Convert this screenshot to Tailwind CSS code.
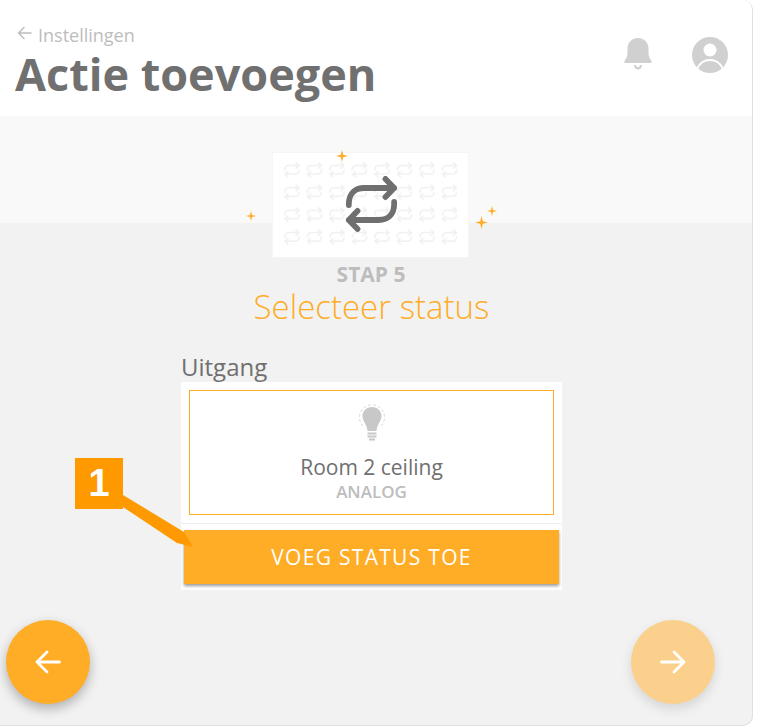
<!DOCTYPE html>
<html lang="nl">
<head>
    <meta charset="UTF-8">
    <title>Actie toevoegen</title>
    <script src="https://cdn.jsdelivr.net/npm/@tailwindcss/browser@4"></script>
</head>
<body class="bg-white font-['Open_Sans',sans-serif] w-[757px] h-[727px] overflow-hidden">
    <div class="relative w-[753px] h-[726px] flex flex-col overflow-hidden rounded-r-[10px] border-r border-b border-[#e0e0e0] bg-[#f2f2f2]">

        <!-- header -->
        <header class="h-[116px] shrink-0 bg-white flex justify-between pl-[15px] pr-[24px]">
            <div>
                <div class="flex items-center gap-[6px] pl-[2px] pt-[24px] h-[46px] text-[#bdbdbd] text-[18px] leading-[22px]">
                    <svg class="w-[15px] h-[14px] -mt-[4px]" viewBox="0 0 15 14" fill="none" stroke="#bdbdbd" stroke-width="1.5" stroke-linecap="round" stroke-linejoin="round"><path d="M14 7H1.500M7 1.500 1.500 7 7 12.500"/></svg>
                    <span>Instellingen</span>
                </div>
                <h1 class="text-[45px] leading-[50px] mt-[3px] font-bold text-[#707070]">Actie toevoegen</h1>
            </div>
            <div class="flex items-start gap-[40px] pt-[37px]">
                <svg class="w-[28px] h-[34px]" viewBox="0 0 28 34" fill="#d0d0d0"><path d="M14 1c6 0 10.500 4.500 10.500 10.500v5c0 3 1.500 5 3 7.500.5 1 0 2-1 2H1.500c-1 0-1.500-1-1-2 1.500-2.500 3-4.500 3-7.500v-5C3.500 5.500 8 1 14 1Z"/><path d="M10 28h2c0 2.800 4 2.800 4 0h2c0 6-8 6-8 0Z"/></svg>
                <svg class="w-[36px] h-[36px]" viewBox="0 0 36 36"><defs><clipPath id="userClip"><circle cx="18" cy="18" r="18"/></clipPath></defs><circle cx="18" cy="18" r="18" fill="#d0d0d0"/><g clip-path="url(#userClip)"><circle cx="18" cy="13" r="6.500" fill="#fff"/><path d="M5 32c3-7 8-9 13-9s10 2 13 9" fill="none" stroke="#fff" stroke-width="2"/></g></svg>
            </div>
        </header>

        <!-- lighter band behind the step picture -->
        <div class="absolute left-0 right-0 top-[116px] h-[107px] bg-[#f9f9f9]"></div>

        <main class="relative flex-1 flex flex-col items-center">
            <div class="relative mt-[36px] ml-[-11px] w-[197px] h-[106px] bg-white border border-[#f5f5f5]">
                <svg class="absolute inset-0 w-full h-full" fill="none" stroke="#f0f0f0" stroke-linecap="round" stroke-linejoin="round">
                    <defs>
                        <pattern id="repeatTile" x="11" y="9" width="22.500" height="22.400" patternUnits="userSpaceOnUse">
                            <path d="M1 8v-.5C1 5 2.500 3.500 5 3.500h10M12 .8l3 2.700-3 2.700M15 7.500V8c0 2.500-1.500 4-4 4H1M4 9.300 1 12l3 2.700" stroke-width="1.500"/>
                        </pattern>
                    </defs>
                    <rect x="11" y="9" width="178" height="88" fill="url(#repeatTile)" stroke="none"/>
                </svg>
                <svg class="absolute left-[71px] top-[23px] w-[54px] h-[56px]" viewBox="0 0 56 56" preserveAspectRatio="none" fill="none" stroke="#6f6f6f" stroke-width="6" stroke-linecap="round" stroke-linejoin="round">
                    <path d="M5 29v-1c0-10 6-16 16-16h31M43 3l9 9-9 9"/>
                    <path d="M52 26v2c0 10-6 16-16 16H5M14 35l-9 9 9 9"/>
                </svg>
                <!-- sparkles -->
                <svg class="absolute left-[63px] -top-[3px] w-[12px] h-[12px]" viewBox="0 0 12 12" fill="#ffac26"><path d="M6 0 7.200 4.800 12 6 7.200 7.200 6 12 4.800 7.200 0 6 4.800 4.800Z"/></svg>
                <svg class="absolute -left-[27px] top-[58px] w-[10px] h-[10px]" viewBox="0 0 12 12" fill="#ffac26"><path d="M6 0 7.200 4.800 12 6 7.200 7.200 6 12 4.800 7.200 0 6 4.800 4.800Z"/></svg>
                <svg class="absolute left-[202px] top-[63px] w-[13px] h-[13px]" viewBox="0 0 12 12" fill="#ffac26"><path d="M6 0 7.200 4.800 12 6 7.200 7.200 6 12 4.800 7.200 0 6 4.800 4.800Z"/></svg>
                <svg class="absolute left-[214px] top-[53px] w-[10px] h-[10px]" viewBox="0 0 12 12" fill="#ffac26"><path d="M6 0 7.200 4.800 12 6 7.200 7.200 6 12 4.800 7.200 0 6 4.800 4.800Z"/></svg>
            </div>

            <div class="ml-[-10px] text-[21px] leading-[20px] mt-[6px] font-bold text-[#bdbdbd]">STAP 5</div>
            <h2 class="ml-[-9px] text-[33px] leading-[38px] font-light text-[#ffac26] mt-[4px]">Selecteer status</h2>

            <div class="w-[381px] ml-[-9px] mt-[26px]">
                <div class="text-[24px] leading-[30px] text-[#6f6f6f]">Uitgang</div>
                <div class="bg-white h-[208px] flex flex-col">
                    <div class="mx-[8px] mt-[8px] h-[125px] border border-[#ffac26] flex flex-col items-center pt-[13px]">
                        <svg class="w-[26px] h-[38px]" viewBox="0 0 26 38">
                            <path d="M4 22A12.500 12.500 0 1 1 22 22" fill="none" stroke="#d8d8d8" stroke-width="1" stroke-dasharray="3 2"/>
                            <path d="M13 3c5.500 0 9.500 4 9.500 9 0 5.500-4.500 8-5 15h-9c-.5-7-5-9.500-5-15 0-5 4-9 9.500-9Z" fill="#c8c8c8"/>
                            <path d="M8.500 29.500h9M8.500 32.500h9M10 35.500h6" fill="none" stroke="#c8c8c8" stroke-width="1.800"/>
                        </svg>
                        <div class="text-[21px] leading-[26px] mt-[12px] text-[#6f6f6f]">Room 2 ceiling</div>
                        <div class="text-[17px] leading-[24px] font-semibold text-[#bdbdbd]">ANALOG</div>
                    </div>
                    <div class="mt-[8px] h-px bg-[#eeeeee]"></div>
                    <button class="mx-[3px] mt-[6px] h-[54px] pt-[1px] bg-[#ffac26] text-white text-[21px] tracking-[1.3px] shadow-[0_2px_3px_rgba(0,0,0,0.4)]">VOEG STATUS TOE</button>
                </div>
            </div>
        </main>

        <!-- round navigation buttons -->
        <button class="absolute left-[6px] top-[620px] w-[84px] h-[84px] rounded-full bg-[#ffac26] flex items-center justify-center shadow-[0_5px_12px_rgba(0,0,0,0.28)]">
            <svg class="w-[26px] h-[24px]" viewBox="0 0 26 24" fill="none" stroke="#fff" stroke-width="2.800" stroke-linecap="round" stroke-linejoin="round"><path d="M24.500 12H2M12 2 2 12l10 10"/></svg>
        </button>
        <button class="absolute left-[631px] top-[620px] w-[84px] h-[84px] rounded-full bg-[#fad08c] flex items-center justify-center shadow-[0_5px_12px_rgba(0,0,0,0.12)]">
            <svg class="w-[26px] h-[24px]" viewBox="0 0 26 24" fill="none" stroke="#fff" stroke-width="2.800" stroke-linecap="round" stroke-linejoin="round"><path d="M1.500 12H24M14 2l10 10-10 10"/></svg>
        </button>

        <!-- annotation callout -->
        <svg class="absolute left-[120px] top-[490px] w-[80px] h-[62px]" viewBox="0 0 80 62" fill="#ff9900"><path d="M3 5 64 42 73 57 57 53 3 17Z"/></svg>
        <div class="absolute left-[75px] top-[458px] w-[48px] h-[51px] bg-[#ff9900] flex items-center justify-center text-white text-[38px] font-bold font-['Liberation_Sans',sans-serif]">1</div>
    </div>
</body>
</html>
